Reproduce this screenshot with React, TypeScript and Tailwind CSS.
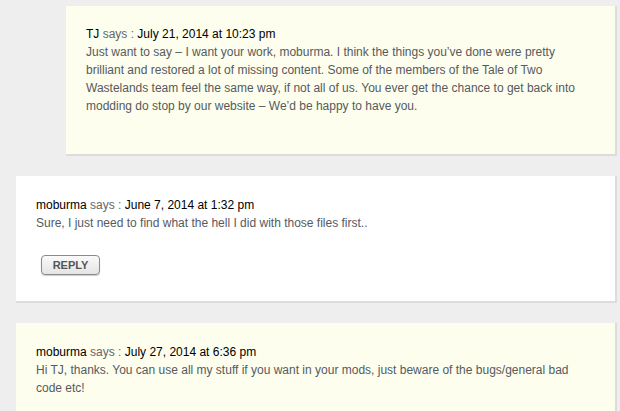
import React from 'react';

type Comment = {
  author: string;
  date: string;
  body: string;
  nested?: boolean;
  highlight?: boolean;
  reply?: boolean;
};

const comments: Comment[] = [
  {
    author: 'TJ',
    date: 'July 21, 2014 at 10:23 pm',
    body: 'Just want to say – I want your work, moburma. I think the things you’ve done were pretty brilliant and restored a lot of missing content. Some of the members of the Tale of Two Wastelands team feel the same way, if not all of us. You ever get the chance to get back into modding do stop by our website – We’d be happy to have you.',
    nested: true,
    highlight: true,
  },
  {
    author: 'moburma',
    date: 'June 7, 2014 at 1:32 pm',
    body: 'Sure, I just need to find what the hell I did with those files first..',
    reply: true,
  },
  {
    author: 'moburma',
    date: 'July 27, 2014 at 6:36 pm',
    body: 'Hi TJ, thanks. You can use all my stuff if you want in your mods, just beware of the bugs/general bad code etc!',
    highlight: true,
  },
];

const CommentCard: React.FC<{ comment: Comment }> = ({ comment }) => (
  <div
    className={`${comment.nested ? 'ml-[66px] pt-[19px] pb-[39px]' : 'ml-4 pt-5'} ${
      comment.highlight ? 'bg-[#fdfeee]' : 'bg-white'
    } ${comment.reply ? 'pb-[25px]' : ''} ${
      !comment.nested && !comment.reply ? 'pb-[39px]' : ''
    } mr-[5px] shrink-0 px-5 shadow-[1px_1px_0_1px_#dcdcdc]`}
  >
    <p className="text-[12px] leading-[18px]">
      <span className="text-black">{comment.author}</span>
      <span className="text-[#666]"> says : </span>
      <span className="text-black">{comment.date}</span>
    </p>
    <p className="text-[12px] leading-[18px] text-[#555a60]">{comment.body}</p>
    {comment.reply && (
      <button className="mt-[23px] ml-[5px] h-5 w-[59px] rounded-[4px] border border-[#8a8a8a] bg-gradient-to-b from-[#fafafa] to-[#e4e4e4] text-[11px] font-bold text-[#555] shadow-[0_1px_1px_#ccc]">
        REPLY
      </button>
    )}
  </div>
);

export default function App() {
  return (
    <div
      className="flex h-[411px] w-[620px] flex-col gap-[22px] overflow-hidden bg-[#eeeeee] pt-[6px]"
      style={{ fontFamily: '"Liberation Sans", Arial, sans-serif' }}
    >
      {comments.map((c, i) => (
        <CommentCard key={i} comment={c} />
      ))}
    </div>
  );
}
